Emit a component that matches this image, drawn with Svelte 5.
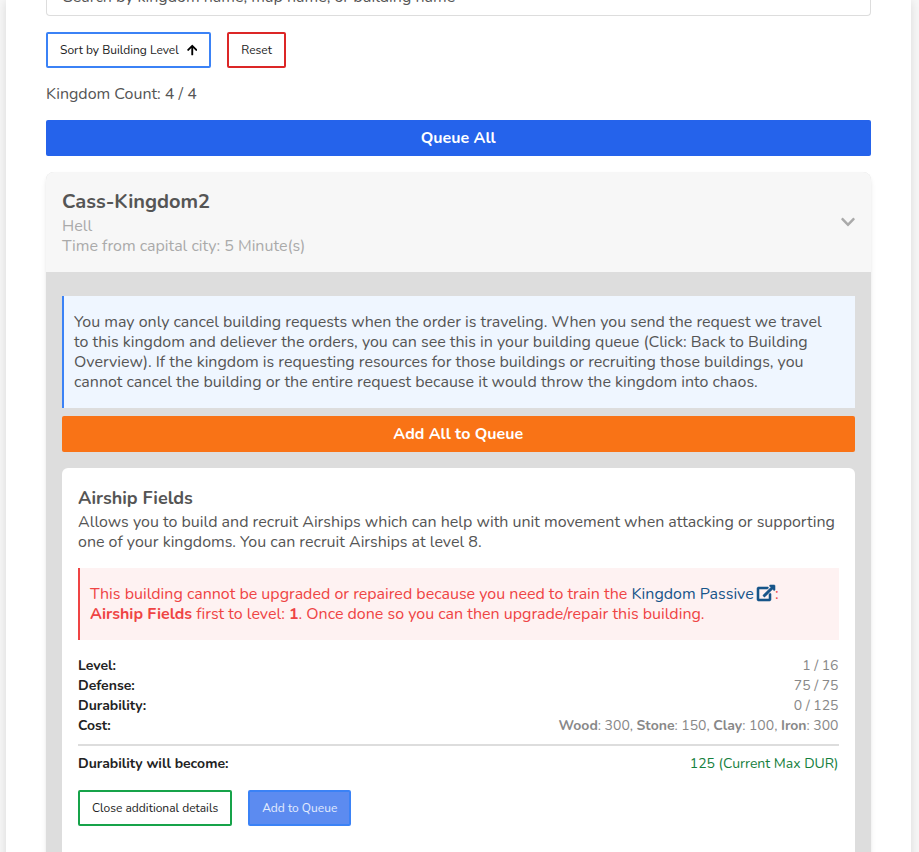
<script>
  const stats = [
    { label: 'Level:', value: '1 / 16' },
    { label: 'Defense:', value: '75 / 75' },
    { label: 'Durability:', value: '0 / 125' },
  ];
  const costs = [
    ['Wood', 300],
    ['Stone', 150],
    ['Clay', 100],
    ['Iron', 300],
  ];
</script>

<div class="page">
  <main class="card">
    <div class="search">Search by kingdom name, map name, or building name</div>

    <div class="filters">
      <button class="btn outline-blue">
        Sort by Building Level
        <svg width="10.5" height="12" viewBox="0 0 448 512" fill="currentColor"><path d="M34.9 289.5l-22.2-22.2c-9.4-9.4-9.4-24.6 0-33.9L207 39c9.4-9.4 24.6-9.4 33.9 0l194.3 194.3c9.4 9.4 9.4 24.6 0 33.9L413 289.4c-9.5 9.5-25 9.3-34.3-.4L264 168.6V456c0 13.3-10.7 24-24 24h-32c-13.3 0-24-10.7-24-24V168.6L69.2 289.1c-9.3 9.8-24.8 10-34.3.4z" /></svg>
      </button>
      <button class="btn outline-red">Reset</button>
    </div>

    <p class="count">Kingdom Count: 4 / 4</p>
    <button class="wide blue">Queue All</button>

    <section class="kingdom">
      <header>
        <div>
          <h2>Cass-Kingdom2</h2>
          <p>Hell</p>
          <p>Time from capital city: 5 Minute(s)</p>
        </div>
        <svg width="14" height="16" viewBox="0 0 448 512" fill="currentColor"><path d="M207.029 381.476L12.686 187.132c-9.373-9.373-9.373-24.569 0-33.941l22.667-22.667c9.357-9.357 24.522-9.375 33.901-.04L224 284.505l154.745-154.021c9.379-9.335 24.544-9.317 33.901.04l22.667 22.667c9.373 9.373 9.373 24.569 0 33.941L240.971 381.476c-9.373 9.372-24.569 9.372-33.942 0z" /></svg>
      </header>

      <div class="body">
        <div class="alert info">
          You may only cancel building requests when the order is traveling. When you send the request we travel<br />
          to this kingdom and deliever the orders, you can see this in your building queue (Click: Back to Building<br />
          Overview). If the kingdom is requesting resources for those buildings or recruiting those buildings, you<br />
          cannot cancel the building or the entire request because it would throw the kingdom into chaos.
        </div>
        <button class="wide orange">Add All to Queue</button>

        <article class="building">
          <h3>Airship Fields</h3>
          <p>
            Allows you to build and recruit Airships which can help with unit movement when attacking or supporting<br />
            one of your kingdoms. You can recruit Airships at level 8.
          </p>

          <div class="alert danger">
            This building cannot be upgraded or repaired because you need to train the <a href="#passive">Kingdom Passive<svg width="18" height="16" viewBox="0 0 576 512" fill="currentColor" stroke="currentColor" stroke-width="18"><path d="M576 24v127.984c0 21.461-25.96 31.98-40.971 16.971l-35.707-35.709-243.523 243.523c-9.373 9.373-24.568 9.373-33.941 0l-22.627-22.627c-9.373-9.373-9.373-24.569 0-33.941L442.756 76.676l-35.703-35.705C391.982 25.9 402.656 0 424.024 0H552c13.255 0 24 10.745 24 24zM407.029 270.794l-16 16A23.999 23.999 0 0 0 384 303.765V448H64V128h264a24.003 24.003 0 0 0 16.97-7.029l16-16C376.089 89.851 365.381 64 344 64H48C21.49 64 0 85.49 0 112v352c0 26.51 21.49 48 48 48h352c26.51 0 48-21.49 48-48V287.764c0-21.382-25.852-32.09-40.971-16.97z" /></svg></a>:<br />
            <strong>Airship Fields</strong> first to level: <strong>1</strong>. Once done so you can then upgrade/repair this building.
          </div>

          <dl>
            {#each stats as s}
              <div><dt>{s.label}</dt><dd>{s.value}</dd></div>
            {/each}
            <div>
              <dt>Cost:</dt>
              <dd>{#each costs as [name, amount], i}<strong>{name}</strong>: {amount}{i < costs.length - 1 ? ', ' : ''}{/each}</dd>
            </div>
          </dl>
          <hr />
          <dl>
            <div><dt>Durability will become:</dt><dd class="green">125 (Current Max DUR)</dd></div>
          </dl>

          <div class="actions">
            <button class="btn outline-green">Close additional details</button>
            <button class="btn disabled">Add to Queue</button>
          </div>
        </article>
      </div>
    </section>
  </main>
</div>

<style>
  :global(body) { margin: 0; overflow: hidden; }
  * { box-sizing: border-box; }
  .page {
    height: 852px;
    overflow: hidden;
    padding: 0 8.5px 0 6px;
    background: #f7f7f7;
    color: #555;
    font: 16px/20px Nunito, Lato, sans-serif;
    letter-spacing: -0.006px;
    white-space: nowrap;
  }
  .card {
    height: 900px;
    padding: 0 40px;
    background: #fff;
    box-shadow: 0 1px 10px rgba(0, 0, 0, 0.12);
  }
  h2, h3, p, dl, dd { margin: 0; }
  button { font-family: inherit; margin: 0; }
  .search {
    height: 16px;
    display: flex;
    align-items: flex-end;
    padding: 0 16px 8px;
    border: 1px solid #ddd;
    border-top: 0;
    border-radius: 0 0 4px 4px;
  }
  .filters, .actions { display: flex; gap: 16px; }
  .filters { margin-top: 16px; }
  .btn {
    height: 36px;
    display: flex;
    align-items: center;
    justify-content: center;
    gap: 8px;
    padding: 0 12px;
    border: 2px solid;
    border-radius: 2px;
    background: #fff;
    color: #222;
    font-size: 12px;
    line-height: 16px;
  }
  .outline-blue { border-color: #3b82f6; }
  .outline-blue svg { color: #000; }
  .outline-red { border-color: #dc2626; }
  .outline-green { border-color: #16a34a; }
  .disabled { border-color: #3b82f6; background: #5c8bf0; color: #e4ecfd; }
  .count { margin-top: 16px; }
  .wide {
    display: block;
    width: 100%;
    height: 36px;
    padding: 0;
    border: 0;
    border-radius: 2px;
    color: #fff;
    font-size: 16px;
    font-weight: 700;
    line-height: 20px;
  }
  .blue { margin-top: 16px; background: #2563eb; }
  .orange { margin-top: 8px; background: #f97316; }
  .kingdom {
    height: 760px;
    margin-top: 16px;
    border-radius: 8px 8px 0 0;
    background: #ddd;
    box-shadow: 0 4px 6px -1px rgba(0, 0, 0, 0.1), 0 2px 4px -1px rgba(0, 0, 0, 0.06);
  }
  header {
    height: 100px;
    display: flex;
    align-items: center;
    justify-content: space-between;
    padding: 0 16px;
    border-radius: 8px 8px 0 0;
    background: #f7f7f7;
    color: #aaa;
  }
  h2 { padding: 1px 0; color: #555; font-size: 20px; line-height: 26px; }
  .body { padding: 24px 16px 0; }
  .alert { padding: 16px 10px; border-left: 2px solid; }
  .info { border-color: #3b82f6; background: #eff6ff; }
  .building { height: 500px; margin-top: 16px; padding: 18px 16px 0; border-radius: 6px; background: #fff; }
  h3 { margin-bottom: 2px; font-size: 18px; line-height: 24px; }
  .danger { margin: 16px 0; border-color: #ef4444; background: #fef2f2; color: #ef4444; }
  a { color: #17558a; text-decoration: none; }
  a svg { margin: 0 0 0 3.4px; vertical-align: -1.6px; overflow: visible; }
  dl { font-size: 14px; }
  dl > div { display: flex; justify-content: space-between; }
  dt { color: #222; font-weight: 700; }
  dd { color: #888; }
  .green { color: #15803d; }
  hr { height: 2px; margin: 8px 0; border: 0; background: #ddd; }
  .actions { margin-top: 16px; }
</style>
